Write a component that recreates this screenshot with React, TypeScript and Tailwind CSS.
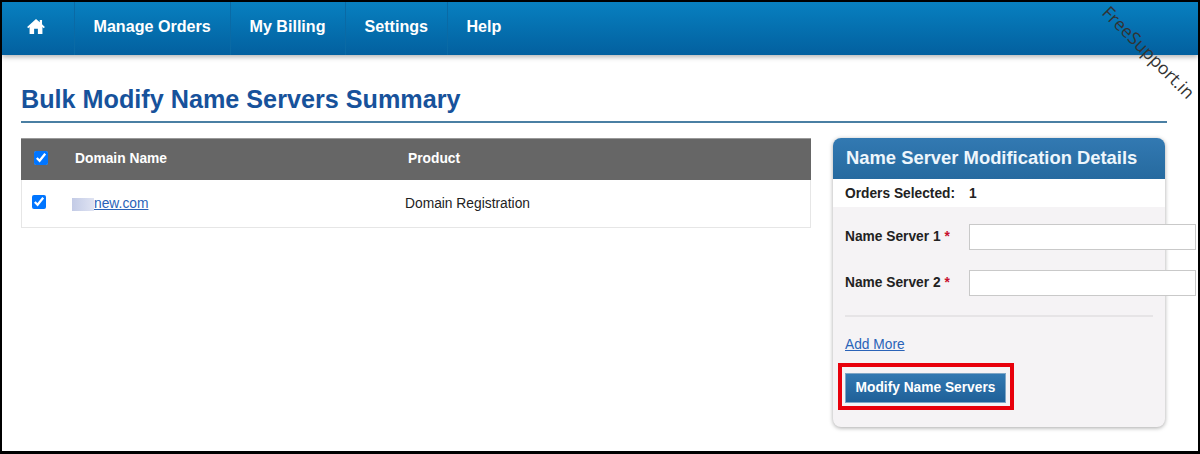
import React from "react";

const navItems = [
  { label: "Manage Orders", cls: "w-[156px]" },
  { label: "My Billing", cls: "w-[115px]" },
  { label: "Settings", cls: "w-[102px]" },
  { label: "Help", cls: "w-[102px]" },
];

function Home() {
  return (
    <svg viewBox="0 0 20 18" className="w-[20px] h-[17px]" fill="#fff">
      <path d="M10 1 L0.6 9.4 L1.8 10.8 L3.2 9.6 V17 H8 V11.5 H12 V17 H16.8 V9.6 L18.2 10.8 L19.4 9.4 L16.4 6.7 V2 H14 V4.6 Z" />
    </svg>
  );
}

export default function App() {
  return (
    <div className="relative w-[1200px] h-[454px] overflow-hidden bg-white border-t-[2px] border-l-[2px] border-r-[2px] border-b-[3px] border-black font-['Liberation_Sans',Arial,sans-serif]">
      <nav className="flex h-[53px] bg-gradient-to-b from-[#0880c0] to-[#03609f] shadow-[0_2px_5px_rgba(0,0,0,0.3)]">
        <div className="w-[73px] flex items-center justify-center border-r border-[#0a6aa5] pb-[5px] pr-[4px]">
          <Home />
        </div>
        {navItems.map((n) => (
          <div
            key={n.label}
            className={`${n.cls} flex items-center pl-[18.5px] pb-[5px] border-r border-[#0a6aa5] last:border-r-0 text-white font-bold text-[16.1px]`}
          >
            {n.label}
          </div>
        ))}
      </nav>

      <main className="px-[19px]">
        <h1 className="mt-[28px] h-[38px] text-[25.2px] leading-[32px] font-bold text-[#17529b] border-b-[2px] border-[#4a7fa3] mb-0 w-[1146px] box-content pb-0">
          Bulk Modify Name Servers Summary
        </h1>

        <div className="flex mt-[15px] items-start">
          <div className="w-[790px] border border-[#e6e6e6] border-t-0">
            <div className="flex items-center h-[42px] -mx-px bg-[#666666] border-t border-[#999] text-white font-bold text-[13.8px]">
              <div className="w-[54px] flex pl-[13px]">
                <input type="checkbox" defaultChecked className="w-[14px] h-[14px] m-0 mb-[4px]" />
              </div>
              <div className="w-[333px]">Domain Name</div>
              <div>Product</div>
            </div>
            <div className="flex items-center h-[47px] text-[13.8px] text-[#222]">
              <div className="w-[50px] flex pl-[10px]">
                <input type="checkbox" defaultChecked className="w-[14px] h-[14px] m-0 mb-[3px]" />
              </div>
              <div className="w-[333px] flex items-center pt-[1px]">
                <span className="w-[22px] h-[13px] bg-gradient-to-r from-[#c3cbe6] to-[#dfe3f2]"></span>
                <a className="text-[#2a63b8] underline">new.com</a>
              </div>
              <div className="pt-[1px]">Domain Registration</div>
            </div>
          </div>

          <aside className="ml-[22px] w-[332px] h-[289px] rounded-[8px] bg-[#f5f3f5] shadow-[0_1px_4px_rgba(0,0,0,0.35)]">
            <div className="h-[41px] rounded-t-[8px] bg-gradient-to-b from-[#3279b2] to-[#266a9f] flex items-center pl-[13px] pb-[2px] text-[#eef6fc] font-bold text-[18.4px]">
              Name Server Modification Details
            </div>
            <div className="h-[28px] bg-white flex items-center pl-[12px] pt-[2px] text-[13.75px] font-bold text-[#222]">
              <span className="w-[124px]">Orders Selected:</span>
              <span>1</span>
            </div>
            <div className="px-[12px] pt-[17px]">
              <div className="flex items-center h-[26px] text-[13.75px] font-bold text-[#222]">
                <span className="w-[124px] shrink-0">
                  Name Server 1 <span className="text-[#c8102e]">*</span>
                </span>
                <input className="w-[227px] h-[26px] shrink-0 bg-white border border-[#c9c9c9]" />
              </div>
              <div className="flex items-center h-[26px] mt-[20px] text-[13.75px] font-bold text-[#222]">
                <span className="w-[124px] shrink-0">
                  Name Server 2 <span className="text-[#c8102e]">*</span>
                </span>
                <input className="w-[227px] h-[26px] shrink-0 bg-white border border-[#c9c9c9]" />
              </div>
              <div className="mt-[19px] h-[2px] w-[308px] bg-[#e6e4e6]"></div>
              <div className="mt-[19px] text-[13.75px] leading-[17px]">
                <a className="text-[#2a63b8] underline">Add More</a>
              </div>
              <button className="mt-[20px] block w-[161px] h-[30px] pt-[1px] bg-gradient-to-b from-[#3279b2] to-[#1f6098] border border-[#7fa6c6] text-white font-bold text-[13.75px]">
                Modify Name Servers
              </button>
            </div>
          </aside>
        </div>
      </main>

      <div className="absolute left-[1077px] top-[40px] w-[140px] text-center text-[17.6px] leading-[20px] text-[#333] rotate-[45deg] font-['Open_Sans',sans-serif]">
        FreeSupport.in
      </div>

      <div className="absolute left-[836px] top-[361px] w-[176px] h-[47px] border-[4px] border-[#e8000b]"></div>
    </div>
  );
}
